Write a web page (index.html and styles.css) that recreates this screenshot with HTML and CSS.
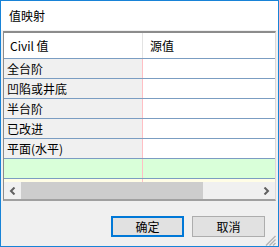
FILE: index.html
```html
<!DOCTYPE html>
<html lang="zh-CN">
<head>
    <meta charset="UTF-8">
    <title>值映射</title>
    <link rel="stylesheet" href="styles.css">
</head>
<body>
    <div class="window">
        <div class="titlebar">值映射</div>

        <div class="content">
            <div class="grid">
                <div class="grid-row header-row">
                    <div class="cell header-cell name-cell">Civil 值</div>
                    <div class="cell header-cell value-cell">源值</div>
                </div>
                <div class="grid-row">
                    <div class="cell name-cell">全台阶</div>
                    <div class="cell value-cell"></div>
                </div>
                <div class="grid-row">
                    <div class="cell name-cell">凹陷或井底</div>
                    <div class="cell value-cell"></div>
                </div>
                <div class="grid-row">
                    <div class="cell name-cell">半台阶</div>
                    <div class="cell value-cell"></div>
                </div>
                <div class="grid-row">
                    <div class="cell name-cell">已改进</div>
                    <div class="cell value-cell"></div>
                </div>
                <div class="grid-row">
                    <div class="cell name-cell">平面(水平)</div>
                    <div class="cell value-cell"></div>
                </div>
                <div class="grid-row new-row">
                    <div class="cell name-cell"></div>
                    <div class="cell value-cell"></div>
                </div>
                <div class="grid-row partial-row">
                    <div class="cell name-cell"></div>
                    <div class="cell value-cell"></div>
                </div>

                <div class="hscroll">
                    <div class="scroll-arrow">
                        <svg width="7" height="8" viewBox="0 0 7 8"><path d="M5.5 0.5 L2 4 L5.5 7.5" fill="none" stroke="#606060" stroke-width="2"/></svg>
                    </div>
                    <div class="scroll-thumb"></div>
                    <div class="scroll-track"></div>
                    <div class="scroll-arrow">
                        <svg width="7" height="8" viewBox="0 0 7 8"><path d="M1.5 0.5 L5 4 L1.5 7.5" fill="none" stroke="#606060" stroke-width="2"/></svg>
                    </div>
                </div>
            </div>

            <div class="footer">
                <button class="btn btn-default">确定</button>
                <button class="btn">取消</button>
                <svg class="grip" width="11" height="11" viewBox="0 0 11 11">
                    <path d="M10.5 1 L1 10.5 M10.5 4.5 L4.5 10.5 M10.5 8 L8 10.5" stroke="#b4b4b4" stroke-width="1.4" fill="none"/>
                </svg>
            </div>
        </div>
    </div>
</body>
</html>
```

FILE: styles.css
```css
* {
    margin: 0;
    padding: 0;
    box-sizing: border-box;
}

body {
    font-family: "Noto Sans CJK SC", "Noto Sans", sans-serif;
    font-size: 12px;
    color: #000;
    background: #f0f0f0;
}

.window {
    width: 279px;
    height: 247px;
    border: 1px solid #1883d7;
    display: flex;
    flex-direction: column;
    background: #f0f0f0;
}

.titlebar {
    height: 29px;
    line-height: 29px;
    padding-left: 8px;
    background: #fff;
}

.content {
    flex: 1;
    display: flex;
    flex-direction: column;
    padding: 1px 2px 0 2px;
}

.grid {
    height: 170px;
    border-style: solid;
    border-width: 2px 1px 2px 1px;
    border-color: #8c8c8c #dadada #a0a0a0 #8c8c8c;
    background: #fff;
    display: flex;
    flex-direction: column;
}

.grid-row {
    display: grid;
    grid-template-columns: 139px 1fr;
    height: 20px;
    border-bottom: 1px solid #7b9dc2;
}

.cell {
    display: flex;
    align-items: center;
    padding-left: 3px;
    white-space: nowrap;
}

.name-cell {
    background: #f0f0f0;
    border-right: 1px solid #ffbfc4;
}

.value-cell {
    background: #fff;
}

.header-row {
    height: 26px;
}

.header-cell {
    background: #fff;
}

.header-cell.name-cell {
    padding-left: 6px;
    border-right-color: #e3e3e3;
}

.header-cell.value-cell {
    padding-left: 7px;
}

.new-row .cell {
    background: #d9ffd9;
}

.partial-row {
    height: 3px;
    border-bottom: none;
}

.partial-row .cell {
    background: #fffde6;
}

.hscroll {
    height: 17px;
    display: flex;
    background: #f0f0f0;
}

.scroll-arrow {
    width: 17px;
    display: flex;
    align-items: center;
    justify-content: center;
}

.scroll-thumb {
    width: 182px;
    background: #cdcdcd;
}

.scroll-track {
    flex: 1;
}

.footer {
    position: relative;
    flex: 1;
    display: flex;
    justify-content: flex-end;
    align-items: flex-start;
    gap: 8px;
    padding: 15px 11px 0 0;
}

.btn {
    width: 73px;
    height: 21px;
    font-family: "Noto Sans CJK SC", "Noto Sans", sans-serif;
    font-size: 12px;
    color: #000;
    background: #e1e1e1;
    border: 1px solid #adadad;
}

.btn-default {
    border: 2px solid #0078d7;
}

.grip {
    position: absolute;
    right: 0;
    bottom: 0;
}
```
